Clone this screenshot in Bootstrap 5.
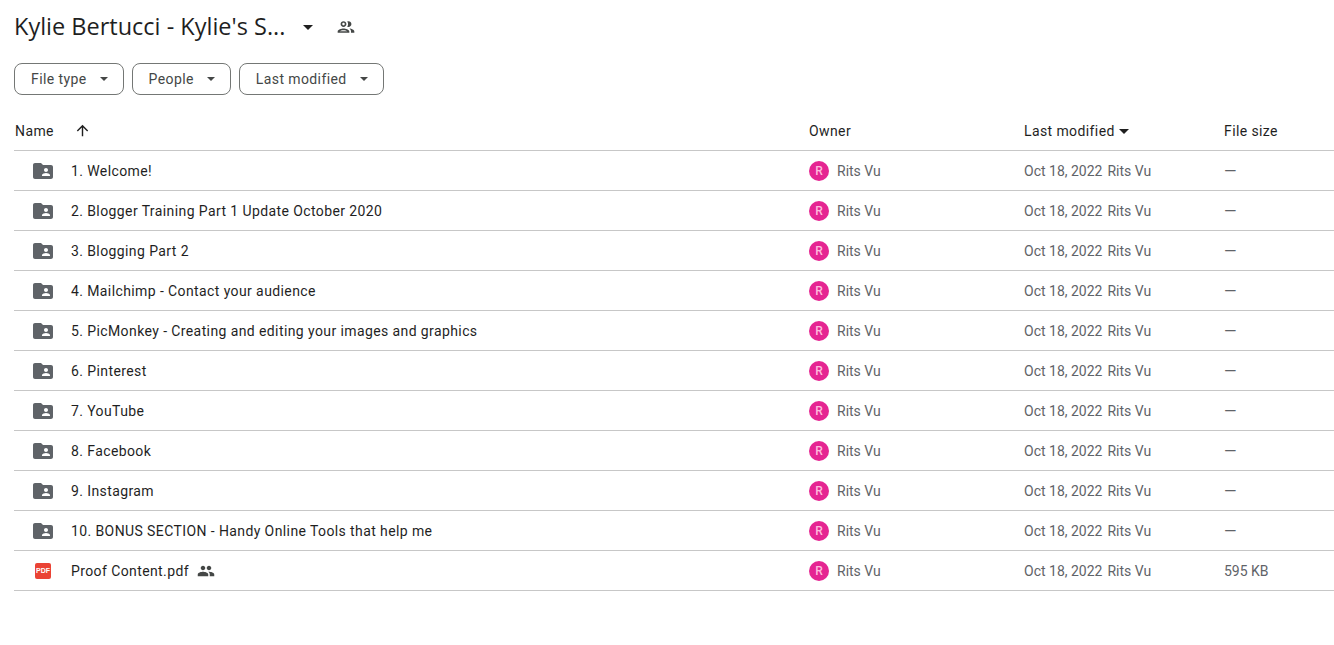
<!DOCTYPE html>
<html lang="en">
<head>
<meta charset="utf-8">
<title>Kylie Bertucci - Kylie's S...</title>
<link rel="stylesheet" href="https://cdn.jsdelivr.net/npm/bootstrap@5.3.0/dist/css/bootstrap.min.css">
<style>
body{font-family:Roboto,"Liberation Sans",sans-serif;font-size:14px;color:#1f1f1f;background:#fff;letter-spacing:.4px;overflow:hidden}
.drive-page{padding:0 0 0 14px}
.drive-head{height:54px}
.drive-title{font-family:"Open Sans",Roboto,sans-serif;font-size:23.5px;font-weight:400;letter-spacing:0;color:#1f1f1f;margin:0 0 2px;line-height:50px}
.caret-big{width:0;height:0;border-left:5px solid transparent;border-right:5px solid transparent;border-top:5px solid #1f1f1f}
.caret-small{width:0;height:0;border-left:4px solid transparent;border-right:4px solid transparent;border-top:4px solid #444746}
.title-caret{margin-left:18px}
.title-people{margin-left:23px}
.filter-row{height:32px;margin-top:9px;margin-bottom:19px}
.chip{height:32px;border:1px solid #747775;border-radius:8px;color:#444746;font-size:14px;letter-spacing:.4px;padding:0 15px 0 16px;background:#fff;display:flex;align-items:center;gap:13px}
.chip:hover{color:#444746;border-color:#747775}
.file-table{width:1320px;margin:0;table-layout:fixed;--bs-table-color:#1f1f1f;--bs-table-border-color:#c7c7c7;border-color:#c7c7c7}
.file-table th,.file-table td{padding:0;vertical-align:middle;height:40px;border-bottom:1px solid #c7c7c7;box-shadow:none}
.file-table td{padding-top:1px}
.file-table td.meta{padding-top:3px}
.file-table th{height:36px;font-weight:400;font-size:14px;letter-spacing:.4px;color:#1f1f1f}
.col-name{width:795px}.col-owner{width:215px}.col-mod{width:200px}.col-size{width:110px}
.th-name{padding-left:1px!important}
.sort-arrow{margin-left:20px;margin-bottom:2px}
.ficon{width:24px;height:24px;margin-left:17px;fill:#5f6368;flex:none}
.pdf-box{width:16px;height:16px;margin:0 4px 0 21px;border-radius:2px;background:#ea4335;color:#fff;font-family:"Liberation Sans",sans-serif;font-size:7px;font-weight:700;letter-spacing:0;line-height:16px;text-align:center;flex:none}
.fname{margin-left:16px;padding-top:2px;color:#1f1f1f}
.avatar{width:20px;height:20px;border-radius:50%;background:#e52592;color:#fbd;font-size:12px;font-weight:500;letter-spacing:0;line-height:20px;text-align:center;flex:none}
.meta{color:#5f6368;letter-spacing:0}
.owner-name{margin-left:8px;padding-top:2px;color:#5f6368;letter-spacing:0}
.mod-name{margin-left:5px}
.dash{font-size:16px;line-height:1;vertical-align:-1px}
</style>
</head>
<body>
<div class="drive-page">
  <div class="drive-head d-flex align-items-center">
    <h1 class="drive-title">Kylie Bertucci - Kylie's S...</h1>
    <span class="caret-big title-caret"></span>
    <svg class="title-people" width="20" height="20" viewBox="0 0 24 24" fill="#444746" aria-hidden="true"><path d="M9 13.75c-2.34 0-7 1.17-7 3.5V19h14v-1.75c0-2.33-4.66-3.5-7-3.5zM4.34 17c.84-.58 2.87-1.25 4.66-1.25s3.82.67 4.66 1.25H4.34zM9 12c1.93 0 3.5-1.57 3.5-3.5S10.93 5 9 5 5.5 6.57 5.5 8.5 7.07 12 9 12zm0-5c.83 0 1.5.67 1.5 1.5S9.83 10 9 10s-1.5-.67-1.5-1.5S8.17 7 9 7zm7.04 6.81c1.16.84 1.96 1.96 1.96 3.44V19h4v-1.75c0-2.02-3.5-3.17-5.96-3.44zM15 12c1.93 0 3.5-1.57 3.5-3.5S16.93 5 15 5c-.54 0-1.04.13-1.5.35.63.89 1 1.98 1 3.15s-.37 2.26-1 3.15c.46.22.96.35 1.5.35z"/></svg>
  </div>
  <div class="filter-row d-flex gap-2">
    <button type="button" class="btn chip">File type <span class="caret-small"></span></button>
    <button type="button" class="btn chip">People <span class="caret-small"></span></button>
    <button type="button" class="btn chip">Last modified <span class="caret-small"></span></button>
  </div>
  <table class="table file-table">
    <colgroup><col class="col-name"><col class="col-owner"><col class="col-mod"><col class="col-size"></colgroup>
    <thead>
      <tr>
        <th class="th-name"><div class="d-flex align-items-center"><span>Name</span><svg class="sort-arrow" width="17" height="17" viewBox="0 0 24 24" fill="#1f1f1f" aria-hidden="true"><path d="M4 12l1.41 1.41L11 7.83V20h2V7.83l5.58 5.59L20 12l-8-8-8 8z"/></svg></div></th>
        <th>Owner</th>
        <th><div class="d-flex align-items-center gap-1">Last modified <span class="caret-big"></span></div></th>
        <th>File size</th>
      </tr>
    </thead>
    <tbody id="rows"></tbody>
  </table>
</div>
<script>
var folder='<svg class="ficon" viewBox="0 0 24 24" aria-hidden="true"><path d="M20 6h-8l-2-2H4c-1.1 0-2 .9-2 2v12c0 1.1.9 2 2 2h16c1.1 0 2-.9 2-2V8c0-1.1-.9-2-2-2zm-5 3c1.1 0 2 .9 2 2s-.9 2-2 2-2-.9-2-2 .9-2 2-2zm4 8h-8v-1c0-1.33 2.67-2 4-2s4 .67 4 2v1z"/></svg>';
var pdf='<span class="pdf-box">PDF</span>';
var people='<svg class="ms-2" width="18" height="18" viewBox="0 0 24 24" fill="#444746" aria-hidden="true"><path d="M16 11c1.66 0 2.99-1.34 2.99-3S17.66 5 16 5c-1.66 0-3 1.34-3 3s1.34 3 3 3zm-8 0c1.66 0 2.99-1.34 2.99-3S9.66 5 8 5C6.34 5 5 6.34 5 8s1.34 3 3 3zm0 2c-2.33 0-7 1.17-7 3.5V19h14v-2.5c0-2.33-4.67-3.5-7-3.5zm8 0c-.29 0-.62.02-.97.05 1.16.84 1.97 1.97 1.97 3.45V19h6v-2.5c0-2.33-4.67-3.5-7-3.5z"/></svg>';
var items=["1. Welcome!","2. Blogger Training Part 1 Update October 2020","3. Blogging Part 2","4. Mailchimp - Contact your audience","5. PicMonkey - Creating and editing your images and graphics","6. Pinterest","7. YouTube","8. Facebook","9. Instagram","10. BONUS SECTION - Handy Online Tools that help me","Proof Content.pdf"];
document.getElementById('rows').innerHTML=items.map(function(n,i){var last=i===10;
return '<tr><td><div class="d-flex align-items-center">'+(last?pdf:folder)+'<span class="fname">'+n+'</span>'+(last?people:'')+'</div></td>'+
'<td><div class="d-flex align-items-center"><span class="avatar">R</span><span class="owner-name">Rits Vu</span></div></td>'+
'<td class="meta">Oct 18, 2022<span class="mod-name">Rits Vu</span></td>'+
'<td class="meta">'+(last?'595 KB':'<span class="dash">—</span>')+'</td></tr>';}).join('');
</script>
<script src="https://cdn.jsdelivr.net/npm/bootstrap@5.3.0/dist/js/bootstrap.bundle.min.js"></script>
</body>
</html>
